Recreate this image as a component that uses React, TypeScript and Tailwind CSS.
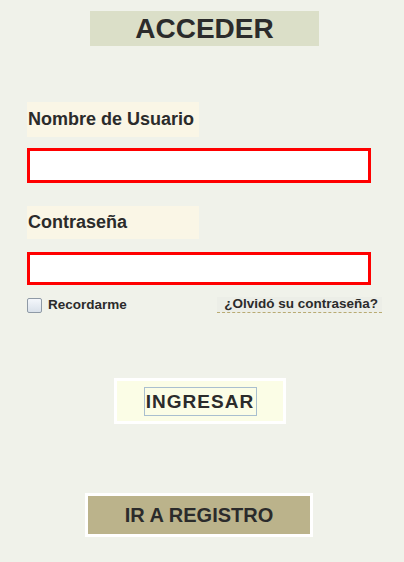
export default function App() {
  return (
    <div className="min-h-[562px] w-[404px] bg-[#f0f2ea] font-['Liberation_Sans',Arial,sans-serif] text-[#2b2b2b]">
      <div className="pt-[11px]">
        <h1 className="ml-[90px] flex h-[35px] w-[229px] items-center justify-center bg-[#dbdfc8] text-[28px] font-bold leading-none">
          ACCEDER
        </h1>
      </div>

      <div className="pl-[27px]">
        <label className="mt-[56px] flex h-[35px] w-[172px] items-center bg-[#faf6e6] pl-px text-[18px] font-bold">
          Nombre de Usuario
        </label>
        <input
          type="text"
          className="mt-[11px] block h-[35px] w-[344px] border-[3px] border-[#ff0000] bg-white outline-none"
        />

        <label className="mt-[23px] flex h-[33px] w-[172px] items-center bg-[#faf6e6] pl-px text-[18px] font-bold">
          Contraseña
        </label>
        <input
          type="password"
          className="mt-[13px] block h-[33px] w-[344px] border-[3px] border-[#ff0000] bg-white outline-none"
        />

        <div className="mt-[12px] flex h-[16px] w-[355px] items-center">
          <span className="h-[15px] w-[15px] rounded-[2px] border border-[#8f9aa6] bg-gradient-to-b from-[#f4f7fb] to-[#d9e1ea]" />
          <span className="ml-[6px] text-[13.5px] font-bold">Recordarme</span>
          <a className="ml-auto flex h-[16px] items-center border-b border-dashed border-[#b9ab72] bg-[#eceee7] pl-[7px] pr-[4px] text-[13.5px] font-bold">
            ¿Olvidó su contraseña?
          </a>
        </div>
      </div>

      <div className="mt-[65px] ml-[114px] flex h-[46px] w-[172px] items-center justify-center border-[3px] border-white bg-[#fbfde6]">
        <button className="flex h-[29px] w-[113px] items-center justify-center border border-[#a9bfcf] text-[19px] font-bold tracking-[1px] leading-none">
          INGRESAR
        </button>
      </div>

      <div className="mt-[69px] ml-[85px] flex h-[44px] w-[228px] items-center justify-center border-[3px] border-white bg-[#bbb38b] text-[20px] font-bold leading-none">
        IR A REGISTRO
      </div>
    </div>
  );
}
